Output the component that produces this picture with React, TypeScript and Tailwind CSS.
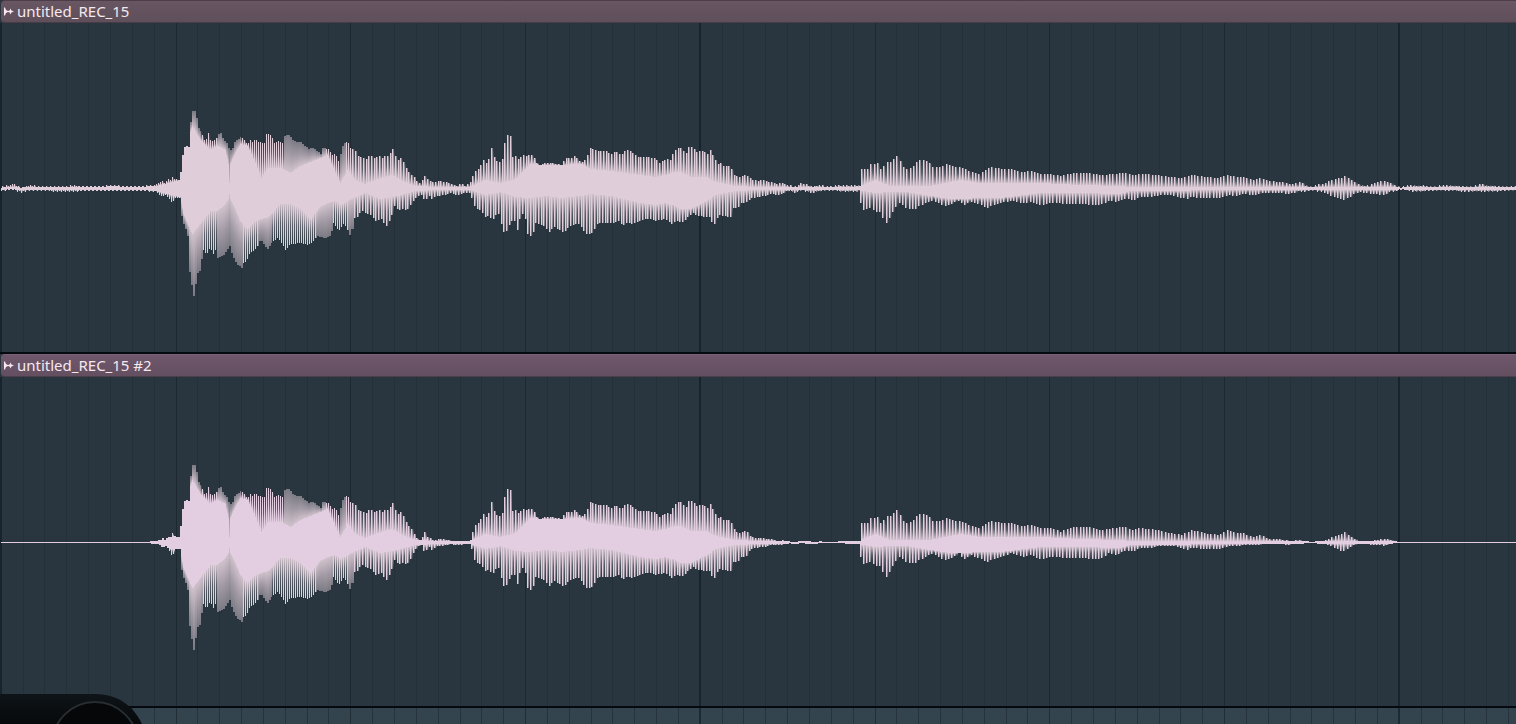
import { useMemo } from "react"

type Points = number[][]

// [x, height above the centre line]
const UPPER: Points = [
  [0, 1], [8, 3], [13, 4], [17, 2], [21, 1], [28, 3], [40, 2], [65, 2], [74, 3], [80, 2], [95, 2], [115, 3], [122, 2], [140, 2], [150, 3], [155, 3], [162, 7], [165, 4], [167, 10], [169, 7], [172, 11], [174, 9], [179, 8],
  [181, 24], [183, 42], [185, 40], [187, 44], [189, 37], [190, 66], [191, 73], [193, 80], [196, 70], [198, 60],
  [200, 57], [204, 48], [205, 46], [208, 55], [211, 44], [213, 50], [215, 45], [217, 54], [220, 55], [223, 48],
  [226, 45], [229, 37], [232, 40], [234, 46], [240, 51], [243, 49], [247, 43], [250, 48], [253, 45], [255, 50],
  [257, 46], [264, 45], [266, 54], [269, 54], [272, 50], [274, 45], [279, 47], [282, 45], [284, 52], [288, 53],
  [292, 48], [295, 46], [300, 46], [303, 43], [308, 39], [311, 41], [315, 38], [320, 34], [322, 40], [328, 39],
  [332, 33], [335, 34], [338, 27], [341, 38], [343, 45], [345, 44], [347, 48], [350, 40], [354, 38], [357, 32],
  [362, 30], [366, 29], [369, 33], [374, 29], [378, 32], [383, 29], [385, 34], [388, 30], [391, 41], [394, 36],
  [396, 25], [398, 30], [401, 30], [403, 25], [406, 18], [410, 14], [413, 11], [416, 7], [420, 4], [423, 13],
  [426, 9], [433, 5], [438, 7], [443, 6], [448, 5], [455, 3], [460, 4], [465, 3], [469, 5], [471, 9], [473, 15],
  [475, 17], [479, 20], [481, 25], [483, 29], [485, 25], [488, 29], [489, 39], [491, 40], [494, 29], [497, 26],
  [499, 26], [502, 30], [503, 39], [505, 51], [508, 55], [510, 51], [512, 31], [516, 33], [518, 27], [521, 33],
  [526, 32], [529, 34], [532, 32], [535, 27], [537, 22], [540, 23], [545, 25], [550, 25], [560, 23], [565, 30],
  [570, 30], [574, 33], [577, 29], [580, 25], [584, 28], [587, 34], [589, 40], [594, 38], [600, 37], [605, 37],
  [610, 34], [614, 37], [620, 33], [625, 38], [630, 37], [633, 34], [637, 31], [645, 31], [655, 30], [658, 24],
  [661, 27], [666, 29], [669, 27], [671, 31], [673, 36], [676, 40], [679, 41], [682, 39], [684, 34], [686, 35],
  [688, 41], [692, 41], [696, 36], [700, 37], [703, 38], [706, 32], [708, 37], [710, 38], [713, 30], [717, 24],
  [720, 25], [723, 22], [729, 22], [731, 18], [734, 12], [740, 11], [745, 13], [750, 9], [757, 7], [762, 8],
  [767, 6], [771, 6], [775, 4], [782, 5], [786, 3], [793, 2], [797, 3], [801, 5], [807, 3], [813, 2], [818, 3],
  [825, 2], [840, 3], [857, 3], [858, 12], [861, 22], [864, 18], [867, 19], [869, 23], [872, 25], [874, 23],
  [877, 25], [879, 19], [881, 19], [883, 22], [886, 26], [889, 26], [892, 28], [895, 34], [898, 29], [901, 23],
  [905, 19], [909, 20], [912, 22], [915, 26], [918, 28], [921, 29], [924, 27], [928, 26], [930, 22], [937, 20],
  [941, 22], [945, 24], [950, 22], [955, 21], [962, 20], [970, 16], [976, 14], [980, 15], [986, 19], [990, 21],
  [995, 20], [1005, 19], [1010, 19], [1020, 16], [1030, 17], [1040, 14], [1050, 14], [1060, 12], [1067, 14],
  [1075, 15], [1087, 15], [1100, 13], [1124, 15], [1130, 13], [1140, 14], [1157, 13], [1170, 11], [1180, 10],
  [1191, 13], [1205, 11], [1218, 10], [1227, 13], [1235, 11], [1243, 11], [1252, 8], [1260, 10], [1267, 7],
  [1280, 6], [1290, 4], [1297, 6], [1303, 4], [1307, 2], [1312, 2], [1318, 4], [1323, 4], [1328, 7], [1333, 9],
  [1340, 10], [1344, 12], [1349, 9], [1354, 6], [1358, 3], [1365, 3], [1373, 5], [1382, 7], [1388, 6], [1393, 3],
  [1399, 1], [1408, 3], [1418, 3], [1430, 2], [1445, 3], [1470, 2], [1480, 4], [1487, 3], [1500, 2], [1516, 2],
]

// [x, depth below the centre line]
const LOWER: Points = [
  [0, 2], [13, 1], [21, 4], [28, 2], [74, 3], [80, 2], [140, 2], [155, 3], [162, 8], [165, 6], [168, 9], [172, 14], [175, 9], [179, 9], [180, 21], [182, 32],
  [185, 40], [188, 50], [189, 83], [192, 103], [194, 110], [196, 80], [198, 88], [200, 75], [203, 61], [206, 66],
  [209, 60], [211, 61], [213, 65], [214, 57], [217, 69], [222, 67], [226, 62], [229, 57], [232, 67], [236, 75],
  [241, 79], [243, 74], [246, 73], [249, 65], [256, 59], [260, 50], [263, 55], [267, 60], [271, 54], [277, 49],
  [280, 52], [285, 61], [290, 55], [300, 54], [307, 56], [312, 53], [317, 47], [325, 49], [330, 46], [333, 34],
  [338, 42], [343, 35], [346, 38], [349, 46], [352, 37], [354, 27], [358, 28], [360, 20], [364, 24], [370, 26],
  [374, 32], [380, 30], [386, 37], [390, 29], [394, 16], [397, 21], [401, 20], [406, 22], [409, 17], [412, 12],
  [416, 8], [420, 5], [424, 12], [428, 7], [431, 10], [436, 7], [444, 6], [450, 4], [456, 6], [465, 4], [469, 4],
  [472, 12], [474, 18], [480, 22], [484, 28], [488, 27], [491, 31], [494, 28], [497, 23], [499, 29], [502, 43],
  [505, 44], [508, 36], [512, 31], [514, 32], [516, 42], [519, 30], [521, 24], [524, 28], [526, 43], [529, 48],
  [532, 44], [535, 34], [539, 35], [544, 38], [548, 43], [553, 38], [557, 40], [563, 44], [568, 38], [573, 36],
  [577, 34], [580, 38], [586, 45], [590, 45], [594, 40], [597, 34], [604, 34], [612, 34], [618, 32], [622, 37],
  [626, 34], [632, 35], [640, 31], [648, 30], [655, 32], [664, 30], [671, 35], [675, 32], [683, 33], [687, 28],
  [692, 24], [698, 27], [706, 28], [710, 28], [712, 37], [715, 34], [717, 26], [722, 27], [730, 28], [733, 17],
  [737, 20], [739, 14], [745, 14], [750, 9], [758, 8], [765, 7], [770, 5], [776, 6], [783, 4], [790, 2], [793, 4],
  [800, 2], [812, 4], [820, 2], [857, 3], [858, 8], [860, 20], [864, 22], [868, 18], [871, 20], [874, 24],
  [878, 22], [881, 27], [885, 34], [889, 28], [893, 21], [898, 14], [902, 16], [905, 19], [910, 20], [914, 21],
  [918, 17], [925, 14], [930, 12], [937, 14], [943, 17], [950, 15], [957, 12], [963, 16], [970, 13], [978, 15],
  [986, 19], [993, 16], [1000, 14], [1010, 12], [1022, 14], [1030, 13], [1040, 16], [1050, 14], [1070, 15],
  [1100, 16], [1107, 12], [1115, 13], [1125, 10], [1133, 11], [1140, 8], [1150, 8], [1160, 6], [1170, 6],
  [1177, 8], [1185, 10], [1190, 8], [1200, 9], [1220, 9], [1228, 6], [1235, 7], [1242, 5], [1253, 6], [1262, 4],
  [1280, 4], [1285, 5], [1300, 3], [1310, 2], [1320, 3], [1328, 6], [1335, 9], [1342, 11], [1349, 8], [1355, 4],
  [1360, 3], [1370, 5], [1382, 6], [1390, 3], [1399, 1], [1415, 3], [1430, 2], [1480, 3], [1516, 2],
]

// [x, solid part above, solid part below]
const CORE: Points = [
  [0, 1, 1], [155, 2, 2], [180, 8, 8], [183, 35, 25], [192, 62, 45], [200, 48, 35], [210, 38, 22], [217, 42, 22],
  [225, 38, 15], [228, 24, 10], [229, 5, 5], [230, 24, 10], [234, 33, 18], [240, 44, 32], [247, 42, 40],
  [255, 25, 32], [261, 10, 30], [268, 20, 28], [280, 20, 15], [290, 15, 15], [300, 22, 20], [310, 26, 30],
  [320, 30, 18], [327, 33, 14], [335, 15, 12], [340, 5, 16], [347, 18, 12], [355, 8, 8], [365, 4, 4],
  [380, 10, 10], [392, 13, 8], [400, 8, 6], [415, 2, 2], [440, 1, 1], [469, 1, 1], [485, 8, 6], [500, 5, 3],
  [515, 9, 8], [530, 24, 9], [545, 23, 7], [560, 23, 9], [580, 24, 7], [590, 19, 5], [610, 17, 7], [640, 13, 14],
  [655, 11, 16], [665, 13, 14], [675, 16, 17], [680, 16, 20], [690, 11, 20], [705, 11, 13], [715, 6, 6],
  [735, 2, 2], [760, 1, 1], [857, 1, 1], [875, 8, 4], [890, 2, 3], [905, 2, 3], [930, 2, 7], [950, 6, 10],
  [960, 8, 10], [980, 5, 9], [1000, 5, 9], [1040, 5, 4], [1080, 3, 4], [1120, 2, 5], [1130, 1, 2], [1250, 1, 1],
  [1516, 1, 1],
]

// stretches where single cycles blur into one soft edge
const SOFT_UPPER = [[189, 201], [217, 241], [284, 326], [340, 346]]
const SOFT_LOWER = [[180, 203], [217, 243], [258, 272], [316, 333], [348, 354]]

const LENGTH = 1516
const CENTER = 165
const BAR = 174.75

function sample(points: Points, x: number, column = 1) {
  let i = 1
  while (i < points.length - 1 && points[i][0] < x) i++
  const a = points[i - 1]
  const b = points[i]
  const t = Math.min(1, Math.max(0, (x - a[0]) / (b[0] - a[0])))
  return a[column] + (b[column] - a[column]) * t
}

function gate(height: number, x: number) {
  if (x < 150 || x > 1398) return 0
  return height < 14 ? (height * height) / 14 : height
}

function period(x: number) {
  if (x < 352) return 2
  if (x < 857) return 8 / 3
  return 3.27
}

function buildWave(gated: boolean) {
  const paths = { core: "", peak: "" }
  const columns: { x: number; y: number; height: number; fill: string }[] = []

  for (let x = 1; x < LENGTH; x++) {
    const p = period(x)
    const sides = [
      { points: UPPER, column: 1, soft: SOFT_UPPER, up: true, shift: 0 },
      { points: LOWER, column: 2, soft: SOFT_LOWER, up: false, shift: 1 },
    ]
    const extent = sides.map((side) => {
      const phase = (x + side.shift) % p
      const height = sample(side.points, x - phase)
      let full = Math.round(gated ? gate(height, x) : height)
      // the noise floor wobbles around the centre line
      if (!gated && full > 0 && full < 4 && x % 4 < 2 === side.up) full -= 1
      const core = Math.min(full, Math.round(sample(CORE, x, side.column)))
      const size = full - core
      if (size > 0) {
        const y = side.up ? CENTER - full : CENTER + 1 + core
        const soft = side.soft.some(([from, to]) => x >= from && x < to)
        if (!soft && phase < 1) {
          paths.peak += `M${x} ${y}h1v${size}h-1z`
        } else {
          const tone = soft || (p > 2 && phase < 2) ? "mid" : "dim"
          columns.push({ x, y, height: size, fill: `${tone}-${side.up ? "up" : "down"}` })
        }
      }
      return core
    })
    paths.core += `M${x} ${CENTER - extent[0]}h1v${extent[0] + extent[1] + 1}h-1z`
  }
  return { paths, columns }
}

function Gradients() {
  const tones = [
    { name: "mid", start: 0.45, middle: 0.66 },
    { name: "dim", start: 0, middle: 0.28 },
  ]
  return (
    <>
      {tones.map((tone) =>
        ["up", "down"].map((direction) => (
          <linearGradient
            key={tone.name + direction}
            id={`${tone.name}-${direction}`}
            x1="0"
            x2="0"
            y1={direction === "up" ? "0" : "1"}
            y2={direction === "up" ? "1" : "0"}
          >
            <stop offset="0" stopColor="#dfced9" stopOpacity={tone.start} />
            <stop offset="0.5" stopColor="#dfced9" stopOpacity={tone.middle} />
            <stop offset="1" stopColor="#dfced9" stopOpacity="0.92" />
          </linearGradient>
        ))
      )}
    </>
  )
}

function Grid() {
  const lines = Array.from({ length: 140 }, (_, i) => {
    const x = Math.floor(1.3 + (i * BAR) / 8)
    if (i === 0) return { x: 0, width: 2, color: "#18242c" }
    if (i % 32 === 0) return { x: x - 1, width: 2, color: "#18242c" }
    if (i % 8 === 0) return { x, width: 1, color: "#1d2931" }
    return { x, width: 1, color: "#243038" }
  })
  return (
    <g>
      {lines.map((line) => (
        <rect key={line.x} x={line.x} width={line.width} height="100%" fill={line.color} />
      ))}
    </g>
  )
}

interface ClipProps {
  name: string
  header: string
  color: string
  gated?: boolean
}

function AudioClip({ name, header, color, gated = false }: ClipProps) {
  const { paths, columns } = useMemo(() => buildWave(gated), [gated])

  return (
    <section aria-label={name} className="border-b-2 border-[#050a10]">
      <header className={`ml-px flex h-[23px] items-center gap-[3px] rounded-l border-y pl-[3px] ${header}`}>
        <button aria-label={`${name} menu`} className="block text-[#f8e8f0]">
          <svg width="10" height="9" viewBox="0 0 10 9" fill="currentColor">
            <path d="M0 0.5h1L2 3l2 1L5.6 3.6 6.5 1.5 7.4 3.6 10 4.5 7.4 5.4 6.5 7.5 5.6 5.4 4 5 2 6 1 8.5H0z" />
          </svg>
        </button>
        <h2 className="pb-0.5 text-[15px] leading-5 text-[#f5e8ee]">{name}</h2>
      </header>
      <svg role="img" aria-label={`${name} waveform`} className="block h-[329px] w-full" shapeRendering="crispEdges">
        <Grid />
        <g fill={color}>
          <path d={paths.core} />
          <path d={paths.peak} />
        </g>
        {columns.map((c, i) => (
          <rect key={i} x={c.x} y={c.y} width="1" height={c.height} fill={`url(#${c.fill})`} />
        ))}
      </svg>
    </section>
  )
}

export default function App() {
  return (
    <main className="relative flex h-screen flex-col overflow-hidden bg-[#2a363f] font-['Noto_Sans',sans-serif]">
      <svg className="absolute h-0 w-0" aria-hidden="true">
        <defs>
          <Gradients />
        </defs>
      </svg>
      <AudioClip
        name="untitled_REC_15"
        color="#dfced9"
        header="border-t-[#4c3d48] border-b-[#4a3c47] bg-linear-to-b from-[#685762] to-[#5f4f5b]"
      />
      <AudioClip
        name="untitled_REC_15 #2"
        color="#e3cee1"
        gated
        header="border-t-[#7a6078] border-b-[#4d3e4c] bg-linear-to-b from-[#6f576c] to-[#644f61]"
      />
      <div className="min-h-0 flex-1 bg-[#33444f]">
        <svg className="block h-full w-full opacity-80" shapeRendering="crispEdges" aria-hidden="true">
          <Grid />
        </svg>
      </div>
      <div className="absolute bottom-0 left-0 h-[30px] w-[145px] overflow-hidden">
        <svg width="145" height="30" aria-hidden="true">
          <defs>
            <linearGradient id="panel" x1="0" x2="0" y1="0" y2="1">
              <stop offset="0" stopColor="#0e1418" />
              <stop offset="1" stopColor="#07090b" />
            </linearGradient>
          </defs>
          <path d="M0 0H95C117 0 133 11 142 30H0z" fill="url(#panel)" />
          <circle cx="95" cy="51" r="43" fill="#050708" stroke="#272d31" strokeWidth="2" />
        </svg>
      </div>
    </main>
  )
}
